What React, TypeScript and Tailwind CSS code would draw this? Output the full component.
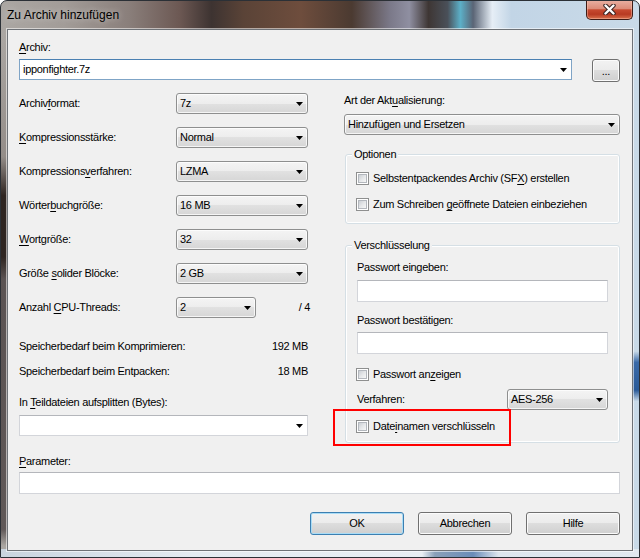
import React from 'react';

const U: React.FC<{ children: React.ReactNode }> = ({ children }) => (
  <span className="underline decoration-[1px] underline-offset-[2px]">{children}</span>
);

const Arrow = () => (
  <svg width="7" height="4" viewBox="0 0 7 4" className="shrink-0">
    <path d="M0 0H7L3.5 4Z" fill="#000" />
  </svg>
);

const DropDown: React.FC<{ value: string; className?: string }> = ({ value, className = '' }) => (
  <div
    className={`flex h-[21px] items-center justify-between rounded-[3px] border border-[#8e8f8f] bg-[linear-gradient(180deg,#f4f4f4_0%,#ededed_50%,#e1e1e1_50%,#d6d6d6_100%)] pl-[3px] pr-[4px] shadow-[inset_0_0_0_1px_rgba(255,255,255,0.75)] ${className}`}
  >
    <span>{value}</span>
    <Arrow />
  </div>
);

const EditCombo: React.FC<{ value?: string; focused?: boolean }> = ({ value = '', focused }) => (
  <div
    className={`flex h-[21px] items-center justify-between border bg-white pl-[3px] pr-[4px] ${
      focused ? 'border-[#7fa4c6] border-t-[#4a80b2]' : 'border-[#d3d5da] border-t-[#b4b6bb]'
    }`}
  >
    <span>{value}</span>
    <Arrow />
  </div>
);

const TextBox: React.FC = () => <div className="h-[22px] border border-[#d3d5da] border-t-[#b4b6bb] bg-white" />;

const CheckBox: React.FC<{ children: React.ReactNode }> = ({ children }) => (
  <div className="flex h-[13px] items-center gap-[4px]">
    <span className="block h-[13px] w-[13px] shrink-0 border border-[#8e8f8f] bg-white p-[1px]">
      <span className="block h-full w-full border border-[#b3b7bd] bg-[linear-gradient(135deg,#cbcfd4_0%,#e4e6e8_50%,#f7f7f7_100%)]" />
    </span>
    <span>{children}</span>
  </div>
);

const Btn: React.FC<{ children: React.ReactNode; def?: boolean; className?: string }> = ({ children, def, className = '' }) => (
  <button
    className={`flex h-[23px] items-center justify-center rounded-[3px] border bg-[linear-gradient(180deg,#f2f2f2_0%,#ebebeb_50%,#dddddd_50%,#cfcfcf_100%)] ${
      def ? 'border-[#3c7fb1] shadow-[inset_0_0_0_1px_#a9dcf6]' : 'border-[#707070] shadow-[inset_0_0_0_1px_#fbfbfb]'
    } ${className}`}
  >
    {children}
  </button>
);

const Group: React.FC<{ title: string; className?: string; children: React.ReactNode }> = ({ title, className = '', children }) => (
  <div className={`relative ml-px rounded-[3px] border border-[#d5dfe5] shadow-[inset_0_0_0_1px_#ffffff] ${className}`}>
    <span className="absolute left-[6px] top-[-7px] bg-[#f0f0f0] px-[2px]">{title}</span>
    {children}
  </div>
);

const rows: { label: React.ReactNode; value: string }[] = [
  { label: <>Archiv<U>f</U>ormat:</>, value: '7z' },
  { label: <><U>K</U>ompressionsstärke:</>, value: 'Normal' },
  { label: <>Kompressions<U>v</U>erfahren:</>, value: 'LZMA' },
  { label: <>Wörter<U>b</U>uchgröße:</>, value: '16 MB' },
  { label: <><U>W</U>ortgröße:</>, value: '32' },
  { label: <>Größe <U>s</U>olider Blöcke:</>, value: '2 GB' },
];

export default function App() {
  return (
    <div className="relative flex h-[558px] w-[640px] flex-col overflow-hidden rounded-t-[7px] border border-[#2b3036] font-['Liberation_Sans',Arial,sans-serif] text-[11px] leading-[13px] tracking-[-0.3px] text-black [background:linear-gradient(180deg,rgba(0,0,0,0)_0%,rgba(0,0,0,0)_6%,rgba(120,110,105,0.45)_28%,rgba(40,30,26,0.95)_35%,rgba(40,30,26,0.95)_46%,rgba(82,74,74,0.9)_50%,rgba(82,74,74,0.85)_95%,rgba(0,0,0,0)_98%)_0_0/8px_100%_no-repeat,linear-gradient(180deg,rgba(0,0,0,0)_63%,#3a6aa8_65%,#2a5a98_70%,rgba(0,0,0,0)_72%)_100%_0/8px_100%_no-repeat,linear-gradient(90deg,#c9d4de_0%,#e4ebf1_30%,#e8eef3_66%,#8aa0b8_68%,#6a8cb8_74%,#dde6ee_78%,#e1e9f0_100%)_0_100%/100%_8px_no-repeat,linear-gradient(90deg,#aba7a3_0%,#a29c98_10%,#8a7f7b_20%,#6c5853_28%,#3d3331_33%,#5a4337_38%,#6e4d3d_47%,#4b3a31_55%,#7b7989_61%,#8f8fa1_64%,#3e3634_67%,#4a5059_70%,#5cb0c8_72%,#5a6475_74%,#e6eef6_77%,#c2d5e6_80%,#c9dae8_100%)]">
      {/* title bar */}
      <div className="flex h-[28px] shrink-0 items-start">
        <span className="pl-[6px] pt-[7px] text-[12px] leading-[15px] tracking-normal [text-shadow:0_0_7px_rgba(255,255,255,0.6)]">
          Zu Archiv hinzufügen
        </span>
        <button className="-mt-px ml-auto mr-[6px] flex h-[20px] w-[47px] items-center justify-center rounded-b-[5px] border border-t-0 border-[#3e1c16] bg-[linear-gradient(180deg,#e9b1a4_0%,#dc8c79_45%,#c74a30_52%,#b83a22_75%,#d8704c_100%)] shadow-[inset_0_0_0_1px_rgba(255,200,180,0.45)]">
          <svg width="13" height="11" viewBox="0 0 13 11">
            <path d="M2.5 1.5L10.5 9.5M10.5 1.5L2.5 9.5" stroke="#3a2422" strokeWidth="4.4" strokeLinecap="round" />
            <path d="M2.5 1.5L10.5 9.5M10.5 1.5L2.5 9.5" stroke="#ffffff" strokeWidth="2.4" strokeLinecap="round" />
          </svg>
        </button>
      </div>

      {/* client area */}
      <div className="mx-[6px] mb-[6px] flex flex-1 flex-col border border-[#6e7277] bg-[#f0f0f0] pl-[11px] pr-[12px] pt-[11px] shadow-[0_0_0_1px_rgba(255,255,255,0.55)]">
        <div>
          <U>A</U>rchiv:
        </div>
        <div className="mt-[5px] flex items-start">
          <div className="w-[553px]">
            <EditCombo value="ipponfighter.7z" focused />
          </div>
          <Btn className="ml-auto w-[28px] items-end pb-[3px]">...</Btn>
        </div>

        <div className="mt-[11px] flex items-start">
          {/* left column */}
          <div className="flex w-[289px] flex-col">
            <div className="flex flex-col gap-[13px]">
              {rows.map((r, i) => (
                <div key={i} className="flex h-[21px] items-center">
                  <span className="flex-1">{r.label}</span>
                  <DropDown value={r.value} className="w-[132px]" />
                </div>
              ))}
              <div className="flex h-[21px] items-center">
                <span className="w-[157px]">
                  Anzahl <U>C</U>PU-Threads:
                </span>
                <DropDown value="2" className="w-[80px]" />
                <span className="-mr-[2px] flex-1 text-right">/ 4</span>
              </div>
            </div>
            <div className="mt-[22px] flex justify-between">
              <span>Speicherbedarf beim Komprimieren:</span>
              <span>192 MB</span>
            </div>
            <div className="mt-[12px] flex justify-between">
              <span>Speicherbedarf beim Entpacken:</span>
              <span>18 MB</span>
            </div>
            <div className="mt-[18px]">
              In <U>T</U>eildateien aufsplitten (Bytes):
            </div>
            <div className="mt-[6px]">
              <EditCombo />
            </div>
          </div>

          {/* right column */}
          <div className="ml-auto flex w-[276px] flex-col">
            <div className="mt-px">
              Art der Akt<U>u</U>alisierung:
            </div>
            <DropDown value="Hinzufügen und Ersetzen" className="mt-[7px]" />

            <Group title="Optionen" className="mt-[19px] flex flex-col gap-[13px] pb-[12px] pl-[10px] pt-[17px]">
              <CheckBox>
                Selbstentpackendes Archiv (SF<U>X</U>) erstellen
              </CheckBox>
              <CheckBox>
                Zum Schreiben <U>g</U>eöffnete Dateien einbeziehen
              </CheckBox>
            </Group>

            <Group title="Verschlüsselung" className="mt-[21px] flex flex-col pb-[9px] pl-[11px] pr-[11px] pt-[15px]">
              <div>Passwort eingeben:</div>
              <div className="mt-[6px]">
                <TextBox />
              </div>
              <div className="mt-[12px]">Passwort bestätigen:</div>
              <div className="mt-[5px]">
                <TextBox />
              </div>
              <div className="-ml-px mt-[14px]">
                <CheckBox>
                  Passwort an<U>z</U>eigen
                </CheckBox>
              </div>
              <div className="mt-[8px] flex h-[21px] items-center">
                <span>Verfahren:</span>
                <DropDown value="AES-256" className="ml-auto w-[101px]" />
              </div>
              <div className="-ml-px mt-[10px]">
                <CheckBox>
                  Date<U>i</U>namen verschlüsseln
                </CheckBox>
              </div>
            </Group>
          </div>
        </div>

        <div className="mt-[12px]">
          <U>P</U>arameter:
        </div>
        <div className="mt-[4px]">
          <TextBox />
        </div>

        <div className="mt-[18px] flex justify-end gap-[14px]">
          <Btn def className="w-[94px]">
            OK
          </Btn>
          <Btn className="w-[94px]">Abbrechen</Btn>
          <Btn className="w-[94px]">Hilfe</Btn>
        </div>
      </div>

      {/* annotation */}
      <div className="pointer-events-none absolute left-[332px] top-[408px] h-[37px] w-[178px] border-2 border-[#ff0000]" />
    </div>
  );
}
